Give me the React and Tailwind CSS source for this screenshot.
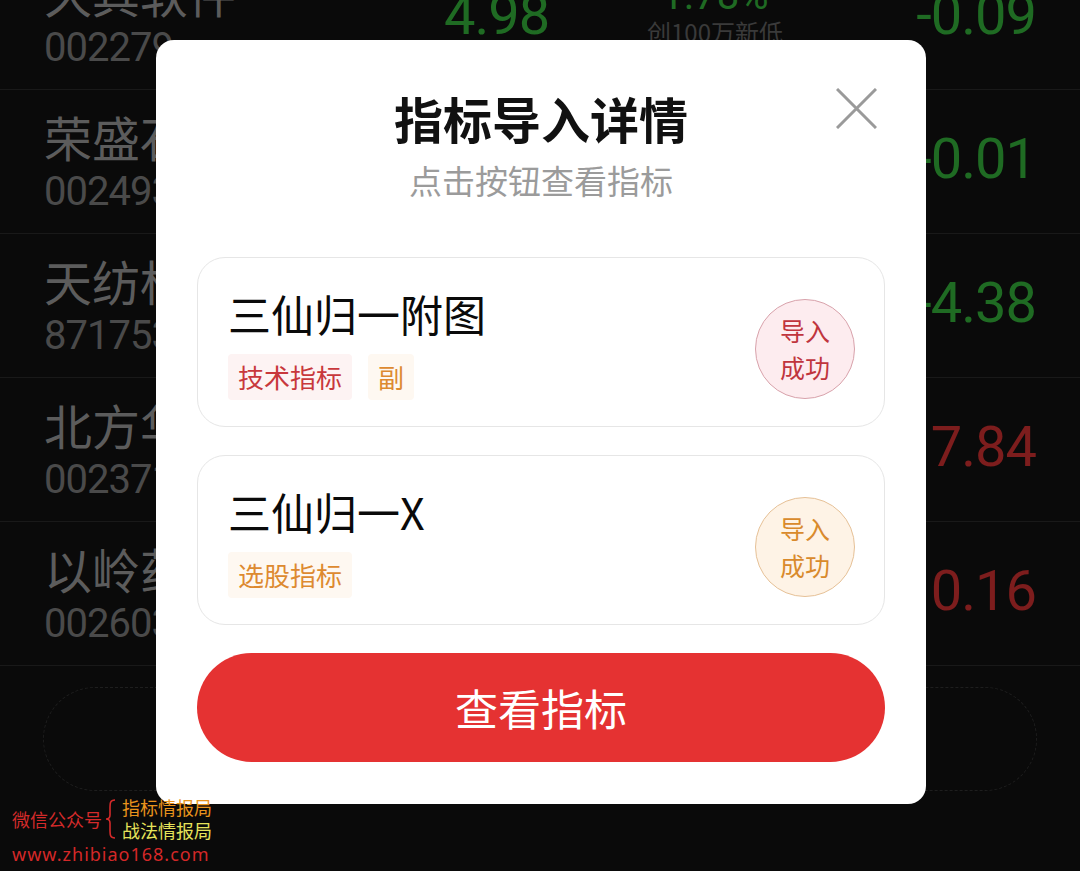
import { useState } from "react";

const stocks = [
  { name: "久其软件", code: "002279", price: "4.98", pct: "1.78%", note: "创100万新低", value: "-0.09", up: false },
  { name: "荣盛石化", code: "002493", price: "9.12", pct: "0.11%", note: "", value: "-0.01", up: false },
  { name: "天纺标", code: "871753", price: "8.06", pct: "2.35%", note: "", value: "-4.38", up: false },
  { name: "北方华创", code: "002371", price: "298.5", pct: "2.70%", note: "", value: "7.84", up: true },
  { name: "以岭药业", code: "002603", price: "15.06", pct: "1.07%", note: "", value: "0.16", up: true },
];

const items = [
  {
    title: "三仙归一附图",
    tags: [
      { text: "技术指标", tone: "red" },
      { text: "副", tone: "orange" },
    ],
    tone: "red",
  },
  {
    title: "三仙归一X",
    tags: [{ text: "选股指标", tone: "orange" }],
    tone: "orange",
  },
];

const StockRow = ({ s }) => (
  <div className="h-[144px] border-b border-[#191919] flex flex-row items-start px-[44px]">
    <div className="w-[400px] flex flex-col pt-[22px]">
      <span className="text-[48px] leading-[48px] text-[#5c5c5c] font-['Noto_Sans_CJK_SC',sans-serif]">
        {s.name}
      </span>
      <span className="mt-[12px] text-[40px] leading-[40px] text-[#4a4a4a] font-['Roboto',sans-serif] tracking-[-1px]">
        {s.code}
      </span>
    </div>
    <div className="w-[150px] pt-[41px] text-[56px] leading-[56px] font-['Roboto',sans-serif] tracking-[-1px] text-[#1f6b23]">
      {s.price}
    </div>
    <div className="flex-1 flex flex-col items-center pt-[30px]">
      <span className={`text-[40px] leading-[40px] font-['Roboto',sans-serif] ${s.up ? "text-[#7d1d1d]" : "text-[#1f6b23]"}`}>
        {s.pct}
      </span>
      <span className="mt-[4px] text-[24px] leading-[24px] text-[#3a3a3a] font-['Noto_Sans_CJK_SC',sans-serif]">
        {s.note}
      </span>
    </div>
    <div
      className={`w-[200px] text-right pt-[41px] text-[56px] leading-[56px] font-['Roboto',sans-serif] tracking-[-1px] ${
        s.up ? "text-[#7d1d1d]" : "text-[#1f6b23]"
      }`}
    >
      {s.value}
    </div>
  </div>
);

const Tag = ({ text, tone }) => (
  <span
    className={`h-[46px] px-[10px] flex items-center rounded-[4px] text-[26px] leading-[26px] ${
      tone === "red" ? "bg-[#fdf3f3] text-[#c8383c]" : "bg-[#fef8f1] text-[#dd8a30]"
    }`}
  >
    {text}
  </span>
);

const Badge = ({ tone }) => (
  <div
    className={`mt-[14px] w-[100px] h-[100px] rounded-full border flex flex-col items-center justify-center text-[25px] leading-[37px] ${
      tone === "red"
        ? "bg-[#fdecef] border-[#d8a2ab] text-[#c0353d]"
        : "bg-[#fef3e6] border-[#e6c197] text-[#d98a2c]"
    }`}
  >
    <span>导入</span>
    <span>成功</span>
  </div>
);

const App = () => {
  const [open, setOpen] = useState(true);

  return (
    <div className="relative w-[1080px] h-[871px] overflow-hidden bg-[#0a0a0a] font-['Noto_Sans_CJK_SC',sans-serif]">
      <div className="-mt-[54px] flex flex-col">
        {stocks.map((s) => (
          <StockRow key={s.code} s={s} />
        ))}
        <div className="mx-[43px] mt-[21px] h-[104px] rounded-full border border-dashed border-[#1e1e1e]" />
      </div>

      {open && (
        <div className="absolute left-[156px] top-[40px] w-[770px] h-[764px] bg-white rounded-[18px] flex flex-col items-center px-[41px] pt-[54px] pb-[42px]">
          <button
            className="absolute top-[48px] right-[49px] w-[41px] h-[41px]"
            onClick={() => setOpen(false)}
          >
            <svg viewBox="0 0 41 41" className="w-[41px] h-[41px]">
              <path d="M1 1 L40 40 M40 1 L1 40" stroke="#9a9a9a" strokeWidth="3" fill="none" />
            </svg>
          </button>
          <h1 className="text-[49px] leading-[48px] font-bold text-[#111]">指标导入详情</h1>
          <p className="mt-[22px] text-[33px] leading-[32px] text-[#9b9b9b]">点击按钮查看指标</p>

          <div className="mt-[61px] w-full flex flex-col gap-[28px]">
            {items.map((item) => (
              <div
                key={item.title}
                className="h-[170px] rounded-[28px] border border-[#e6e6e6] flex flex-row items-center pl-[30px] pr-[29px]"
              >
                <div className="flex-1 flex flex-col self-start pt-[34px]">
                  <span className="text-[43px] leading-[42px] text-[#0a0a0a]">{item.title}</span>
                  <div className="mt-[20px] flex flex-row gap-[16px]">
                    {item.tags.map((t) => (
                      <Tag key={t.text} text={t.text} tone={t.tone} />
                    ))}
                  </div>
                </div>
                <Badge tone={item.tone} />
              </div>
            ))}
          </div>

          <button className="mt-[28px] w-full h-[109px] rounded-full bg-[#e53232] text-white text-[43px] leading-[43px]">
            查看指标
          </button>
        </div>
      )}

      <div className="absolute left-[12px] top-[796px] flex flex-col">
        <div className="flex flex-row items-center">
          <span className="text-[18px] leading-[18px] text-[#d42a2a]">微信公众号</span>
          <svg viewBox="0 0 12 40" className="w-[12px] h-[40px] ml-[3px] mr-[5px]">
            <path
              d="M10 1 C5 1 5 4 5 10 L5 16 C5 19 4 20 1 20 C4 20 5 21 5 24 L5 30 C5 36 5 39 10 39"
              stroke="#d42a2a"
              strokeWidth="1.6"
              fill="none"
            />
          </svg>
          <div className="flex flex-col">
            <span className="text-[18px] leading-[23px] text-[#e8931c]">指标情报局</span>
            <span className="text-[18px] leading-[23px] text-[#e6e35a]">战法情报局</span>
          </div>
        </div>
        <span className="mt-[2px] text-[18px] leading-[20px] tracking-[1px] text-[#d42828] font-['Noto_Sans',sans-serif]">
          www.zhibiao168.com
        </span>
      </div>
    </div>
  );
};

export default App;
